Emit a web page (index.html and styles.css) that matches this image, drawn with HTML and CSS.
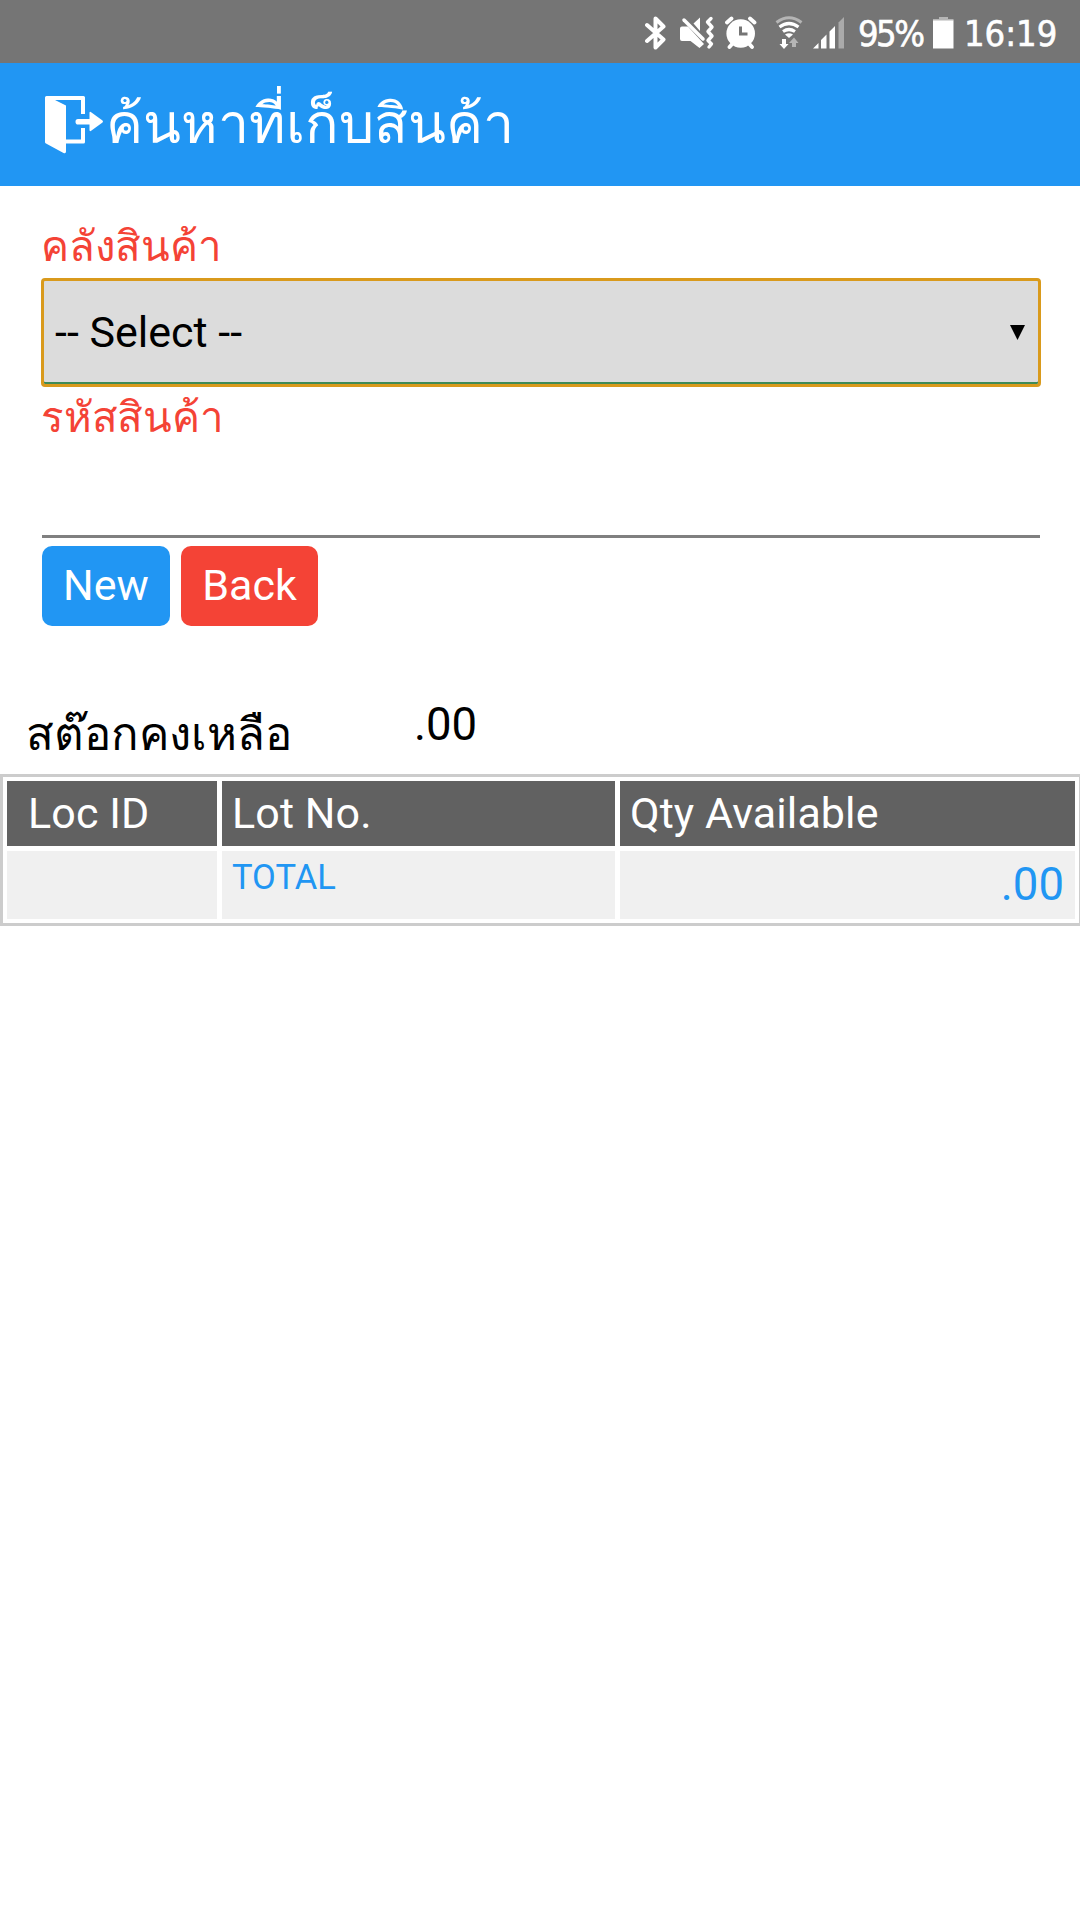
FILE: index.html
```
<!DOCTYPE html>
<html lang="th">
<head>
<meta charset="UTF-8">
<title>ค้นหาที่เก็บสินค้า</title>

<link rel="stylesheet" href="styles.css">
</head>
<body>
	<div id="statusbar">
		<svg class="bluetooth" width="21" height="34" viewBox="0 0 21 34">
			<path d="M2 9 L18.500 23.500 L10.500 31.500 V2.500 L18.500 10.500 L2 25" fill="none" stroke="#fff" stroke-width="4" stroke-linejoin="round" stroke-linecap="round"/>
		</svg>
		<svg class="mute" width="36" height="34" viewBox="0 0 36 34">
			<path d="M0 12.500 Q0 10.500 2 10.500 H8 L24 28 L19.500 32 L10.500 25 H2 Q0 25 0 23 Z" fill="#fff"/>
			<path d="M13.500 7.500 L20 1.500 V15 Z" fill="#fff"/>
			<path d="M4 4 L23 23" stroke="#fff" stroke-width="3.500" stroke-linecap="round"/>
			<path d="M31 2.500 L27.500 6 L32 11 L28 15.500 L32 20 L28 24.500 L31.500 28 L29 31" fill="none" stroke="#fff" stroke-width="3.400" stroke-linecap="round" stroke-linejoin="round"/>
		</svg>
		<svg class="alarm" width="32" height="34" viewBox="0 0 32 34">
			<circle cx="15.700" cy="17.500" r="14.300" fill="#fff"/>
			<path d="M2 6.500 L6.500 2.500 M25 2.500 L29.500 6.500 M4.500 31 L8 27 M27 31 L23.500 27" stroke="#fff" stroke-width="3.800" stroke-linecap="round"/>
			<path d="M15.500 10.500 V18 H22.500" fill="none" stroke="#757575" stroke-width="3"/>
		</svg>
		<svg class="wifi" width="28" height="34" viewBox="0 0 28 34">
			<path d="M1.500 6.500 Q14 -3 26.500 6.500" fill="none" stroke="#b5b5b5" stroke-width="3"/>
			<path d="M4.500 11 Q14 4 23.500 11 M8 15.500 Q14 11.500 20 15.500" fill="none" stroke="#fff" stroke-width="3.200"/>
			<path d="M10 18.500 Q14 16 18 18.500 L14 22 Z" fill="#fff"/>
			<path d="M7 23 H11 V28 H13.500 L9 33 L4.500 28 H7 Z" fill="#fff"/>
			<path d="M17 31 V27 H14 L19 21.500 L23.500 27 H21 V31 Z" fill="#b5b5b5"/>
		</svg>
		<svg class="signal" width="33" height="34" viewBox="0 0 33 34">
			<path d="M1 32.500 L6.500 27 V32.500 Z M9 32.500 V24 L14.500 18.500 V32.500 Z M17.500 32.500 V15.500 L23 10 V32.500 Z" fill="#fff"/>
			<path d="M26.500 32.500 V6.500 L32 1 V32.500 Z" fill="#aaa"/>
		</svg>
		<span class="percent">95%</span>
		<svg class="battery" width="21" height="34" viewBox="0 0 21 34">
			<path d="M6 1 H15 V3 H20.500 V5 H0 V3 H6 Z" fill="#b5b5b5"/>
			<path d="M0 4.500 H20.500 V32.500 H0 Z" fill="#fff"/>
		</svg>
		<span class="clock">16:19</span>
	</div>

	<div id="header">
		<svg class="exit" width="59" height="58" viewBox="0 0 59 58">
			<path d="M1.500 0 H38.500 Q40 0 40 1.500 V18 H36 V4 H10 L21 9.500 V43.500 H36 V32 H40 V46 Q40 47.500 38.500 47.500 H21 V55.500 Q21 58 18.500 57 L1 47.500 Q0 47 0 46 V1.500 Q0 0 1.500 0 Z" fill="#fff"/>
			<path d="M33 23 H44.500 V17 Q44.500 15 46.500 16.500 L57.500 24.500 Q58.500 25.500 57.500 26.500 L46.500 34.500 Q44.500 36 44.500 34 V28.500 H33 Q30.500 28.500 30.500 25.700 Q30.500 23 33 23 Z" fill="#fff"/>
		</svg>
		<h1>ค้นหาที่เก็บสินค้า</h1>
	</div>

	<form name="searchFrm">
		<label for="warehouse">คลังสินค้า</label>
		<div class="selectbox">
			<select name="warehouse" id="warehouse">
				<option>-- Select --</option>
			</select>
			<svg class="arrow" width="15" height="15" viewBox="0 0 15 15"><path d="M0 0 H15 L7.500 15 Z"/></svg>
		</div>
		<label for="itemcode">รหัสสินค้า</label>
		<input type="text" name="itemcode" id="itemcode" class="myinput"/>
		<div class="buttons">
			<button type="reset" class="btn new">New</button>
			<button type="button" class="btn back">Back</button>
		</div>
	</form>

	<div id="stock">
		<span class="title">สต๊อกคงเหลือ</span>
		<span class="value">.00</span>
	</div>

	<div id="lots">
		<div class="th first">Loc ID</div>
		<div class="th">Lot No.</div>
		<div class="th">Qty Available</div>
		<div class="td"></div>
		<div class="td total">TOTAL</div>
		<div class="td qty">.00</div>
	</div>
</body>
</html>
```
FILE: styles.css
```
* {
	box-sizing: border-box;
}

body {
	margin: 0;
	background-color: #fff;
	color: #000;
	font-family: Roboto, serif;
	font-size: 43px;
	overflow: hidden;
}

svg {
	display: block;
	flex: none;
}

/* status bar */
#statusbar {
	display: flex;
	justify-content: flex-end;
	height: 63px;
	padding: 16px 23px 0 0;
	background-color: #757575;
	color: #fff;
	font-family: "DejaVu Sans Condensed", "DejaVu Sans", sans-serif;
	font-stretch: condensed;
	font-size: 36px;
	line-height: 36px;
	white-space: nowrap;
	-webkit-text-stroke: 0.6px #fff;
}

.mute {
	margin-left: 14px;
}

.alarm {
	margin-left: 9px;
}

.wifi {
	margin-left: 18px;
}

.signal {
	margin-left: 9px;
}

.percent {
	width: 75px;
	margin-left: 13px;
	letter-spacing: -2.5px;
}

.clock {
	width: 93px;
	margin-left: 10px;
}

/* title */
#header {
	display: flex;
	align-items: center;
	height: 123px;
	padding-left: 45px;
	background-color: #2196f3;
	color: #fff;
}

h1 {
	margin: 0 0 0 2px;
	font-size: 55.5px;
	font-weight: normal;
	line-height: 121px;
}

/* search form */
form {
	padding: 30px 40px 0 42px;
}

label {
	display: block;
	height: 62px;
	margin-left: -1px;
	color: #f44336;
	font-size: 42px;
	letter-spacing: -0.2px;
	line-height: 61px;
}

.selectbox {
	position: relative;
	margin: 0 -1px;
}

select {
	display: block;
	width: 100%;
	height: 109px;
	padding: 0 11px 2px;
	appearance: none;
	background-color: #dcdcdc;
	border: 3px solid #d99a1c;
	border-radius: 4px;
	box-shadow: inset 0 -2px #3f8b57;
	color: #000;
	font-family: Roboto, sans-serif;
	font-size: 43px;
}

.arrow {
	position: absolute;
	right: 16px;
	top: 47px;
}

.myinput {
	display: block;
	width: 100%;
	height: 89px;
	border: none;
	border-bottom: 3px solid #808080;
	font-size: 43px;
}

.buttons {
	display: flex;
	gap: 11px;
	margin-top: 8px;
}

.btn {
	height: 80px;
	padding: 0 0 2px;
	border: none;
	border-radius: 10px;
	color: #fff;
	font-family: Roboto, sans-serif;
	font-size: 43px;
	line-height: 78px;
}

.new {
	width: 128px;
	background-color: #2196f3;
}

.back {
	width: 137px;
	background-color: #f44336;
}

/* stock on hand */
#stock {
	display: flex;
	height: 79px;
	margin-top: 69px;
	padding-left: 26px;
	font-size: 45.5px;
	line-height: 60px;
}

#stock .title {
	width: 388px;
	padding-top: 10px;
}

/* lot table */
#lots {
	display: grid;
	grid-template-columns: 210px 393px 455px;
	grid-template-rows: 65px 68px;
	gap: 5px;
	width: 1082px;
	padding: 4px;
	border: 3px solid #ccc;
}

.th {
	padding-left: 10px;
	background-color: #616161;
	color: #fff;
	letter-spacing: 0.1px;
	line-height: 65px;
}

.first {
	padding-left: 21px;
}

.td {
	padding: 0 10px;
	background-color: #f0f0f0;
	color: #2196f3;
	line-height: 67px;
}

.total {
	font-size: 34.5px;
	line-height: 52px;
}

.qty {
	padding-right: 11px;
	font-size: 45.5px;
	text-align: right;
}
```
